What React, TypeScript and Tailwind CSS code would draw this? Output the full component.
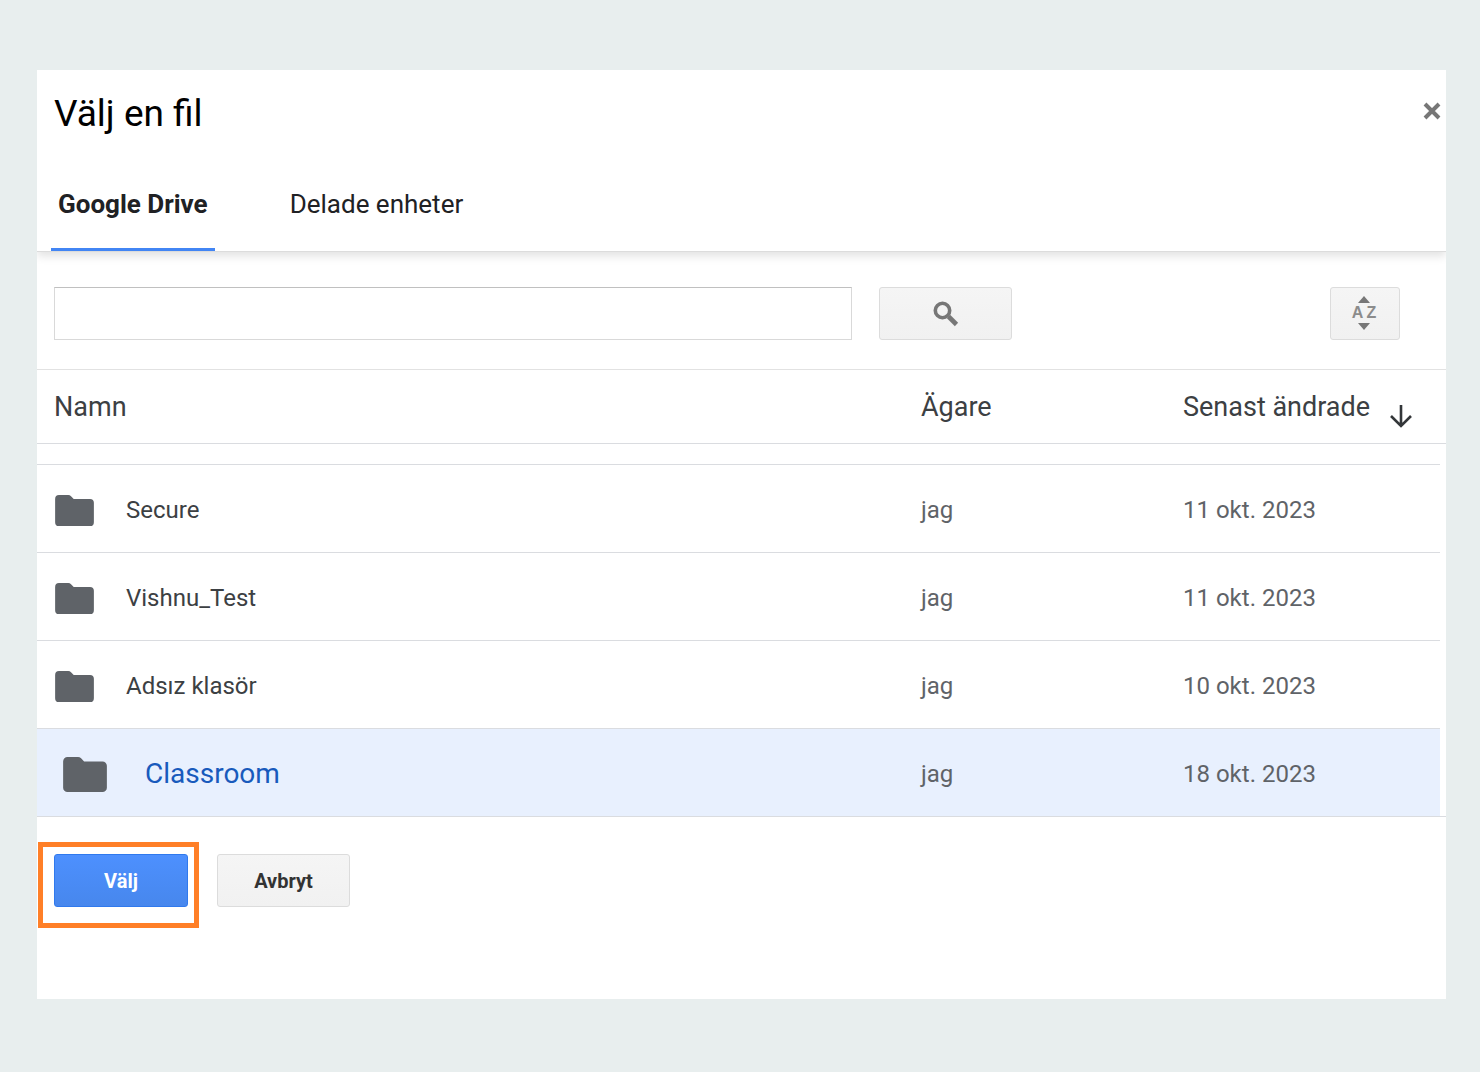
import { useState } from 'react';

type Entry = { name: string; owner: string; modified: string };

const entries: Entry[] = [
  { name: 'Secure', owner: 'jag', modified: '11 okt. 2023' },
  { name: 'Vishnu_Test', owner: 'jag', modified: '11 okt. 2023' },
  { name: 'Adsız klasör', owner: 'jag', modified: '10 okt. 2023' },
  { name: 'Classroom', owner: 'jag', modified: '18 okt. 2023' },
];

function FolderIcon({ className }: { className: string }) {
  return (
    <svg viewBox="2 4 20 16" className={className} fill="#5f6368" aria-hidden="true">
      <path d="M10.200 4.600A2 2 0 0 0 8.800 4H4A2 2 0 0 0 2 6v12a2 2 0 0 0 2 2h16a2 2 0 0 0 2-2V8a2 2 0 0 0-2-2h-8.400z" />
    </svg>
  );
}

function SearchIcon() {
  return (
    <svg viewBox="0 0 26 26" className="size-[26px]" fill="none" stroke="#777" aria-hidden="true">
      <circle cx="9.500" cy="9.500" r="7.200" strokeWidth="3.600" />
      <path d="M15.500 15.500l8 8" strokeWidth="4.600" />
    </svg>
  );
}

function SortIcon() {
  return (
    <span className="flex flex-col items-center pr-0.5 pb-0.5">
      <svg viewBox="0 0 12 7" className="h-[7px] w-3" fill="#777" aria-hidden="true">
        <path d="M6 0l6 7H0z" />
      </svg>
      <span className="flex h-5 items-center gap-[3px] font-['Liberation_Sans',sans-serif] text-base leading-5 font-bold text-[#8c8c8c]">
        <span>A</span>
        <span>Z</span>
      </span>
      <svg viewBox="0 0 12 7" className="h-[7px] w-3" fill="#777" aria-hidden="true">
        <path d="M0 0h12L6 7z" />
      </svg>
    </span>
  );
}

function ArrowDownIcon() {
  return (
    <svg viewBox="0 0 24 24" className="mt-[18px] size-6 shrink-0" fill="none" stroke="#333639" strokeWidth="2.600" aria-hidden="true">
      <path d="M12 1v21M2 12l10 10 10-10" />
    </svg>
  );
}

const grayButton =
  'flex h-[53px] items-center justify-center rounded-[3px] border border-[#dcdcdc] bg-linear-to-b from-[#f5f5f5] to-[#f1f1f1]';

export default function App() {
  const [tab, setTab] = useState('drive');
  const [selected, setSelected] = useState('Classroom');
  const [query, setQuery] = useState('');

  return (
    <div className="min-h-screen bg-[#e8eeee] pt-[70px] pr-[34px] pb-[73px] pl-[37px] font-['Roboto',sans-serif]">
      <main role="dialog" aria-labelledby="title" className="bg-white pb-[92px]">
        <header className="relative border-b border-[#dcdcdc] shadow-[0_4px_9px_rgba(0,0,0,0.12)] [clip-path:inset(0_0_-16px_0)]">
          <div className="flex items-start justify-between pt-[21px] pr-1 pl-[17px]">
            <h1 id="title" className="text-[37px] leading-[46px] text-black">Välj en fil</h1>
            <button type="button" aria-label="Stäng" className="mt-[10px] flex size-5 items-center justify-center">
              <svg viewBox="0 0 18 18" className="size-[18px]" stroke="#777" strokeWidth="4" aria-hidden="true">
                <path d="M2 2l14 14M16 2L2 16" />
              </svg>
            </button>
          </div>
          <nav className="mt-5 flex gap-[68px] pl-3.5 text-[26px] leading-8 text-[#202124]">
            <button
              type="button"
              onClick={() => setTab('drive')}
              className={`border-b-[3px] px-[7px] pt-[31px] pb-7 ${tab === 'drive' ? 'border-[#4285f4] font-bold' : 'border-transparent'}`}
            >
              Google Drive
            </button>
            <button
              type="button"
              onClick={() => setTab('shared')}
              className={`border-b-[3px] px-[7px] pt-[31px] pb-7 ${tab === 'shared' ? 'border-[#4285f4] font-bold' : 'border-transparent'}`}
            >
              Delade enheter
            </button>
          </nav>
        </header>

        <div className="flex items-center justify-between gap-4 border-b border-[#e2e2e2] pt-[35px] pr-[46px] pb-[29px] pl-[17px]">
          <form className="flex max-w-[958px] flex-1 gap-[27px]" onSubmit={(e) => e.preventDefault()}>
            <input
              type="text"
              aria-label="Sök"
              value={query}
              onChange={(e) => setQuery(e.target.value)}
              className="h-[53px] min-w-0 flex-1 border border-[#d9d9d9] border-t-[#c0c0c0] bg-white px-3 text-2xl"
            />
            <button type="submit" aria-label="Sök" className={`${grayButton} w-[133px]`}>
              <SearchIcon />
            </button>
          </form>
          <button type="button" aria-label="Sortera" className={`${grayButton} w-[70px]`}>
            <SortIcon />
          </button>
        </div>

        <table className="w-full table-fixed border-separate border-spacing-0 text-left">
          <colgroup>
            <col />
            <col className="w-[262px]" />
            <col className="w-[257px]" />
            <col className="w-1.5" />
          </colgroup>
          <thead className="text-[27px] leading-8 text-[#3c4043]">
            <tr className="h-[74px]">
              <th className="border-b border-[#dadce0] pl-[17px] font-normal">Namn</th>
              <th className="border-b border-[#dadce0] font-normal">Ägare</th>
              <th colSpan={2} className="border-b border-[#dadce0] pr-0 font-normal">
                <div className="flex items-center gap-[19px]">
                  <span className="whitespace-nowrap">Senast ändrade</span>
                  <ArrowDownIcon />
                </div>
              </th>
            </tr>
          </thead>
          <tbody className="text-2xl leading-8 text-[#5f6368]">
            <tr aria-hidden="true" className="h-5">
              <td colSpan={3} />
            </tr>
            {entries.map((entry) => {
              const active = entry.name === selected;
              return (
                <tr
                  key={entry.name}
                  aria-selected={active}
                  onClick={() => setSelected(entry.name)}
                  className={`h-22 cursor-default *:border-t *:border-[#dadce0] *:pt-[3px] ${active ? '*:bg-[#e8f0fe]' : ''}`}
                >
                  <td className={active ? 'pl-[26px]' : 'pl-[18px]'}>
                    <div
                      className={
                        active
                          ? 'flex items-center gap-[38px] text-[28px] text-[#185abc]'
                          : 'flex items-center gap-8 text-[#3c4043]'
                      }
                    >
                      <FolderIcon className={active ? 'h-[35px] w-11' : 'h-[31px] w-[39px]'} />
                      {entry.name}
                    </div>
                  </td>
                  <td>{entry.owner}</td>
                  <td>{entry.modified}</td>
                </tr>
              );
            })}
          </tbody>
        </table>

        <footer className="flex gap-[29px] border-t border-[#dadce0] pt-[37px] pl-[17px] text-xl font-bold">
          <div className="relative">
            <button
              type="button"
              className="h-[53px] w-[134px] rounded-[3px] border border-[#3079ed] bg-linear-to-b from-[#4d90fe] to-[#4787ed] text-white"
            >
              Välj
            </button>
            <span className="pointer-events-none absolute -top-3 -right-[11px] -bottom-[21px] -left-4 border-5 border-[#ff7f27]" />
          </div>
          <button type="button" className={`${grayButton} w-[133px] text-[#333]`}>
            Avbryt
          </button>
        </footer>
      </main>
    </div>
  );
}
